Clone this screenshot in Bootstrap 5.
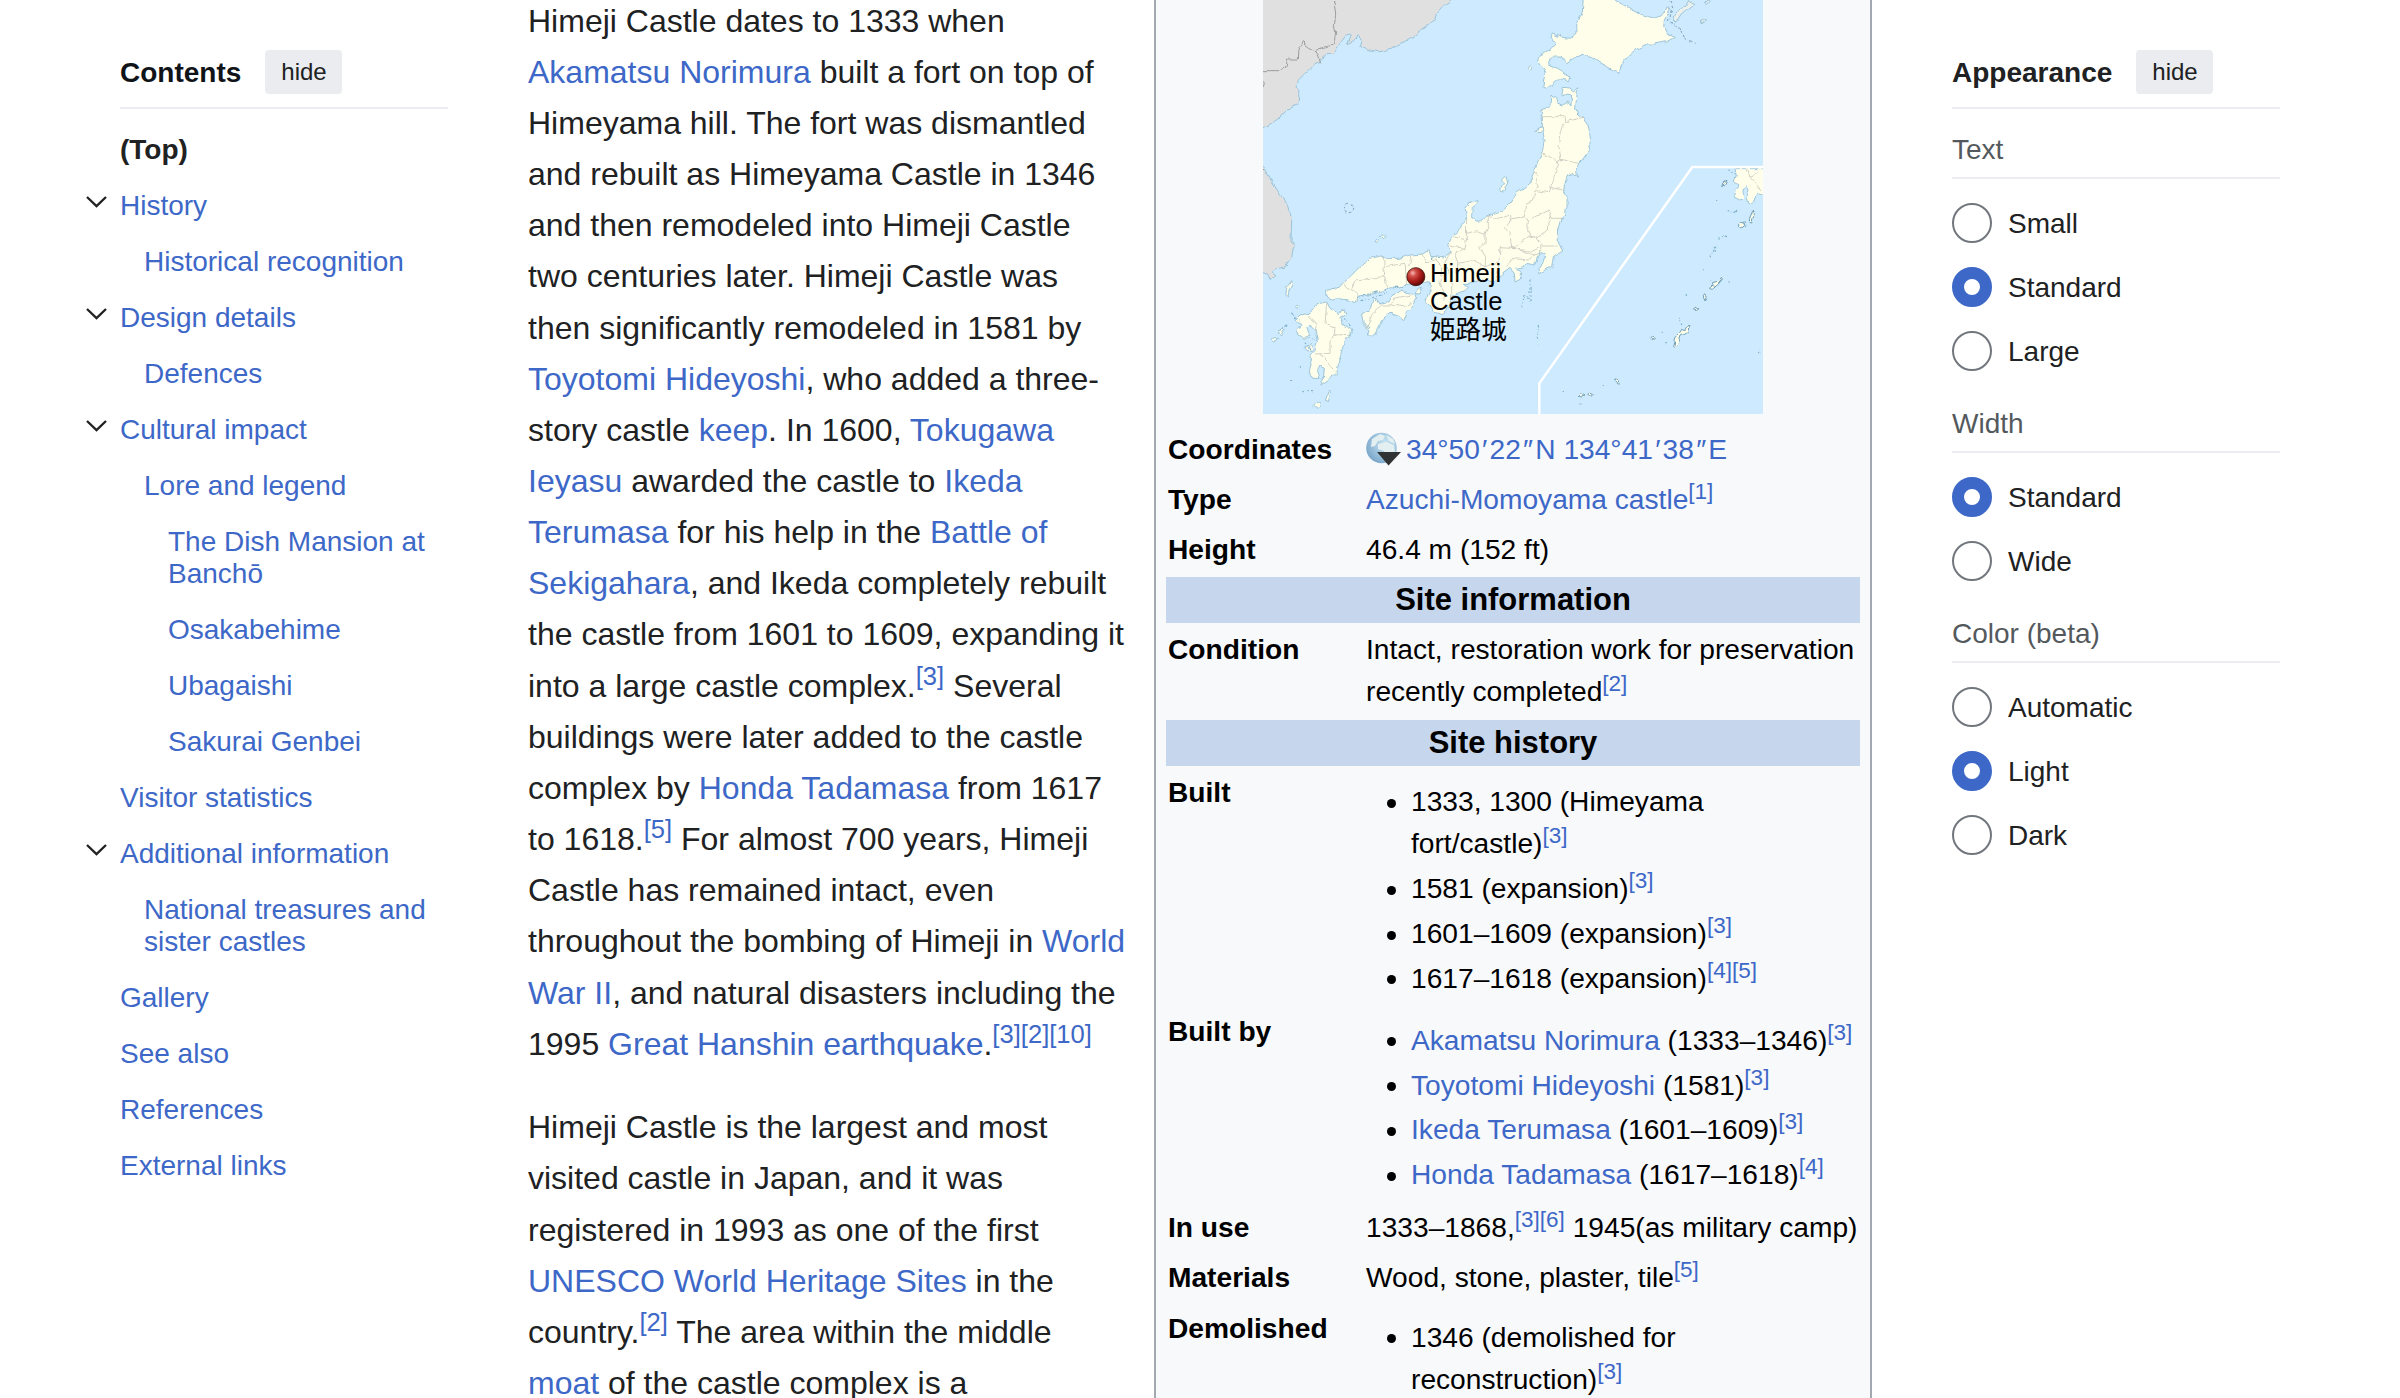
<!DOCTYPE html>
<html lang="en">
<head>
<meta charset="utf-8">
<title>Himeji Castle</title>
<meta name="viewport" content="width=device-width, initial-scale=1">
<link href="https://cdn.jsdelivr.net/npm/bootstrap@5.3.0/dist/css/bootstrap.min.css" rel="stylesheet">
<style>
  :root { --wiki-link: #3d68c8; --wiki-rule: #eaecf0; --wiki-ink: #202122; }
  body { font: 28px/32px "Liberation Sans", "Noto Sans CJK JP", sans-serif; color: var(--wiki-ink); background: #fff; height: 1398px; overflow: hidden; }
  a { color: var(--wiki-link); text-decoration: none; }
  a:hover { text-decoration: underline; }
  sup { position: static; top: auto; font-size: .8em; line-height: 1; vertical-align: super; white-space: nowrap; }

  .wiki-page { height: 1398px; }
  .wiki-toc { width: 328px; margin-left: 120px; }
  .wiki-article { width: 626px; margin-left: 80px; margin-top: -4.4px; font-size: 32px; line-height: 51.15px; white-space: nowrap; }
  .wiki-article p { margin: 0 0 32.4px; }
  .wiki-tools { width: 328px; margin-left: 80px; }

  .panel-head { height: 109px; padding: 50px 0 13px; gap: 24px; border-bottom: 2px solid var(--wiki-rule); }
  .panel-head strong { line-height: 44px; height: 44px; margin-top: 1px; }
  .btn-hide { --bs-btn-padding-x: 16px; --bs-btn-padding-y: 0; --bs-btn-font-size: 24px; --bs-btn-line-height: 42px; --bs-btn-border-width: 0; --bs-btn-border-radius: 4px; --bs-btn-bg: #eaecf0; --bs-btn-color: #202122; --bs-btn-hover-bg: #dadde3; width: 77px; height: 44px; }

  .toc-list { margin-top: 13px; }
  .toc-list li { padding: 12px 0; }
  .toc-list .lvl-2 { padding-left: 24px; }
  .toc-list .lvl-3 { padding-left: 48px; }
  .toc-toggle { width: 21px; height: 12px; margin: 6px 13px 0 -34px; flex: none; }

  .tool-title { color: #54595d; height: 70px; padding-top: 25px; border-bottom: 2px solid var(--wiki-rule); }
  .tool-title.later { height: 82px; padding-top: 37px; }
  .tool-options { padding-top: 24px; gap: 24px; }
  .tool-options .form-check { min-height: 40px; padding: 0; margin: 0; }
  .tool-options .form-check span { padding-top: 2px; }
  .tool-options .form-check-input { width: 40px; height: 40px; margin: 0 16px 0 0; float: none; border: 2px solid #72777d; flex: none; }
  .tool-options .form-check-input:checked { background: #fff; border: 12px solid var(--wiki-link); }

  .infobox { width: 718px; border: solid #a2a9b1; border-width: 0 2px; background: #f8f9fb; color: #000; font-size: 28.16px; line-height: 42.24px; padding: 0 10px; }
  .map-box { width: 500px; height: 414px; margin: 0 0 11px 97px; }
  .map-box svg { display: block; }
  .map-label { left: 167px; top: 259px; font-size: 25.6px; line-height: 28.4px; color: #000; }
  .fact { padding: 4px 0; }
  .fact dt { width: 200px; padding-left: 2px; flex: none; font-weight: 700; }
  .fact dd { margin: 0; white-space: nowrap; }
  .fact ul { list-style: none; margin: 9px 0 0; padding: 0 0 0 45px; }
  .fact li { margin-bottom: 2.6px; }
  .fact li::before { content: ""; display: inline-block; width: 9px; height: 9px; border-radius: 50%; background: #000; margin: 0 15.5px 0 -24.5px; vertical-align: 3.5px; }
  .fact-band { height: 46.5px; line-height: 46px; margin: 2px 0; background: #c6d6ed; font-size: 30.98px; font-weight: 700; text-align: center; }
  .fact-band.first { margin-top: 1px; }
  .prime { padding: 0 2.200px; }
  .globe { width: 36px; height: 36px; margin-right: 4px; vertical-align: -8px; }
</style>
</head>
<body>
<div class="wiki-page d-flex align-items-start">

  <nav class="wiki-toc flex-shrink-0">
    <div class="panel-head d-flex"><strong style="color:#101418">Contents</strong><button class="btn btn-hide">hide</button></div>
    <ul class="toc-list list-unstyled mb-0">
      <li><strong>(Top)</strong></li>
      <li class="d-flex"><svg class="toc-toggle" viewBox="0 0 21 12"><path d="M1 1l9.500 9.200L20 1" fill="none" stroke="#202122" stroke-width="2.300"/></svg><a href="#">History</a></li>
      <li class="lvl-2"><a href="#">Historical recognition</a></li>
      <li class="d-flex"><svg class="toc-toggle" viewBox="0 0 21 12"><path d="M1 1l9.500 9.200L20 1" fill="none" stroke="#202122" stroke-width="2.300"/></svg><a href="#">Design details</a></li>
      <li class="lvl-2"><a href="#">Defences</a></li>
      <li class="d-flex"><svg class="toc-toggle" viewBox="0 0 21 12"><path d="M1 1l9.500 9.200L20 1" fill="none" stroke="#202122" stroke-width="2.300"/></svg><a href="#">Cultural impact</a></li>
      <li class="lvl-2"><a href="#">Lore and legend</a></li>
      <li class="lvl-3"><a href="#">The Dish Mansion at<br>Banchō</a></li>
      <li class="lvl-3"><a href="#">Osakabehime</a></li>
      <li class="lvl-3"><a href="#">Ubagaishi</a></li>
      <li class="lvl-3"><a href="#">Sakurai Genbei</a></li>
      <li><a href="#">Visitor statistics</a></li>
      <li class="d-flex"><svg class="toc-toggle" viewBox="0 0 21 12"><path d="M1 1l9.500 9.200L20 1" fill="none" stroke="#202122" stroke-width="2.300"/></svg><a href="#">Additional information</a></li>
      <li class="lvl-2"><a href="#">National treasures and<br>sister castles</a></li>
      <li><a href="#">Gallery</a></li>
      <li><a href="#">See also</a></li>
      <li><a href="#">References</a></li>
      <li><a href="#">External links</a></li>
    </ul>
  </nav>

  <main class="wiki-article flex-shrink-0">
    <p>Himeji Castle dates to 1333 when<br>
    <a href="#">Akamatsu Norimura</a> built a fort on top of<br>
    Himeyama hill. The fort was dismantled<br>
    and rebuilt as Himeyama Castle in 1346<br>
    and then remodeled into Himeji Castle<br>
    two centuries later. Himeji Castle was<br>
    then significantly remodeled in 1581 by<br>
    <a href="#">Toyotomi Hideyoshi</a>, who added a three-<br>
    story castle <a href="#">keep</a>. In 1600, <a href="#">Tokugawa<br>
    Ieyasu</a> awarded the castle to <a href="#">Ikeda<br>
    Terumasa</a> for his help in the <a href="#">Battle of<br>
    Sekigahara</a>, and Ikeda completely rebuilt<br>
    the castle from 1601 to 1609, expanding it<br>
    into a large castle complex.<sup><a href="#">[3]</a></sup> Several<br>
    buildings were later added to the castle<br>
    complex by <a href="#">Honda Tadamasa</a> from 1617<br>
    to 1618.<sup><a href="#">[5]</a></sup> For almost 700 years, Himeji<br>
    Castle has remained intact, even<br>
    throughout the bombing of Himeji in <a href="#">World<br>
    War II</a>, and natural disasters including the<br>
    1995 <a href="#">Great Hanshin earthquake</a>.<sup><a href="#">[3]</a><a href="#">[2]</a><a href="#">[10]</a></sup></p>
    <p>Himeji Castle is the largest and most<br>
    visited castle in Japan, and it was<br>
    registered in 1993 as one of the first<br>
    <a href="#">UNESCO World Heritage Sites</a> in the<br>
    country.<sup><a href="#">[2]</a></sup> The area within the middle<br>
    <a href="#">moat</a> of the castle complex is a</p>
  </main>

  <aside class="infobox flex-shrink-0 align-self-stretch">
    <div class="map-box position-relative">
      <svg width="500" height="414" viewBox="24 0 1500 1242">
        <defs>
          <filter id="coast" x="0" y="0" width="100%" height="100%"><feTurbulence type="fractalNoise" baseFrequency=".045" numOctaves="2" seed="4"/><feDisplacementMap in="SourceGraphic" scale="14" xChannelSelector="R" yChannelSelector="G"/></filter>
          <radialGradient id="pin" cx=".33" cy=".3" r=".75"><stop offset="0" stop-color="#f6b9b5"/><stop offset=".25" stop-color="#d2504a"/><stop offset=".6" stop-color="#a81c18"/><stop offset="1" stop-color="#5c0805"/></radialGradient>
        </defs>
        <rect x="24" width="1500" height="1242" fill="#cdeafe"/>
        <g filter="url(#coast)">
          <rect x="-100" y="-100" width="1800" height="1500" fill="none"/>
          <g fill="#e0e0e0" stroke="#8fbcd2" stroke-width="2.500">
            <path d="M0-20H610L590 4 560 25 545 42 538 60 515 80 480 105 440 130 405 148 370 156 345 150 318 138 312 104 296 122 278 132 290 102 275 104 255 130 236 162 205 165 198 188 175 195 148 222 130 240 126 258 132 280 128 314 98 328 75 352 50 370 0 392Z"/>
            <path d="M10 480L28 500 50 545 80 590 100 612 110 660 108 725 118 735 108 775 92 800 60 808 50 812 60 830 45 838 38 822 10 815Z"/>
            <path d="M1255 62L1262 40 1290 18 1300 4 1320 14 1300 28 1280 40 1262 68ZM1335 65l12-8 8 3-10 8zM1352 8l10-12 4 4-8 10z" fill="#edf1ee"/>
          </g>
          <g fill="#fffeea" stroke="#8fbcd2" stroke-width="2.500" stroke-linejoin="round">
            <path d="M985-10L982 40 965 65 966 100 945 115 920 112 892 102 888 112 902 130 884 150 858 160 850 185 856 200 872 212 866 240 864 260 878 266 895 250 912 236 940 242 944 232 922 215 905 205 885 198 884 180 896 168 918 168 935 188 960 172 985 162 1010 170 1040 190 1092 220 1100 195 1112 175 1140 150 1175 132 1200 132 1235 125 1258 112 1238 104 1226 78 1228 60 1245 28 1240 20 1218 48 1195 54 1160 44 1130 28 1082 2 1075-10Z"/>
            <path d="M920 288L925 262 945 264 958 276 968 266 964 300 962 325 968 342 984 352 998 372 1004 400 1008 428 1000 455 985 475 970 492 965 515 970 532 958 520 936 530 928 555 926 575 936 590 936 620 930 645 918 655 908 690 906 720 923 753 895 770 890 800 872 808 855 822 852 805 864 785 872 765 858 758 846 775 838 795 815 790 805 800 785 805 800 818 795 838 780 846 778 820 765 805 745 820 735 830 715 845 680 840 660 845 640 850 625 850 640 862 630 872 605 880 590 890 582 920 560 944 535 935 520 912 512 905 520 880 530 860 520 845 500 850 480 858 455 853 430 862 405 860 385 875 340 885 310 888 300 908 280 900 250 896 225 902 215 885 215 870 240 868 265 850 290 825 320 795 345 775 380 768 395 775 430 775 465 765 500 762 522 752 528 770 550 768 575 765 588 755 578 735 590 710 620 680 635 655 630 620 645 606 672 602 668 612 652 622 650 650 660 664 680 662 700 648 740 632 765 610 785 580 820 555 835 520 850 485 862 455 868 420 862 380 862 350 858 332 885 318 888 285 895 292 905 290 908 310 925 315 940 305 948 315 950 285 935 282Z"/>
            <path d="M320 945L345 930 350 912 362 897 372 912 400 905 410 885 440 870 465 880 482 885 480 908 458 935 446 962 430 948 405 940 385 955 375 975 360 1005 340 1005 345 990 325 968Z"/>
            <path d="M135 945L165 938 185 912 215 906 225 925 250 940 268 930 272 945 255 955 265 975 290 990 285 1010 268 1025 258 1060 250 1090 245 1125 230 1125 222 1140 200 1156 195 1145 205 1130 208 1105 195 1098 188 1112 195 1135 170 1135 162 1120 168 1095 165 1065 180 1048 190 1020 185 998 170 985 165 975 155 985 165 1005 150 1018 132 1005 122 990 130 982 145 975 130 968 120 960Z"/>
            <path d="M150 1042l18-8 6 14-16 8zM50 1015l10-6 8 6-10 8zM70 1000l14-16 4 4-10 16zM92 885l4-25 14-18 2 10-10 18-4 20zM738 562l8-12-6-5 14-14 4 18-12 24-8-2zM480 880l10-15 12-3-10 20zM842 392l10-6 12-6 2 12-14 6zM820 205l6-8 6 4-6 10zM376 710l8-6 6 6-6 6zM360 724l6-6 5 4-6 5zM124 920l5-5 4 5-4 5zM212 1205l4-20 8-12 2 6-6 26zM176 1216l8-9 10 3 2 9-9 6z"/>
            <path stroke="#6f9db5" stroke-width="3" d="M1450 672l6-8 10 2 4 10-10 8zM1482 668l4-20 10-15 2 8-8 28zM1400 560l4-12 12-8-6 14zM1345 890l4-6 5 8-5 10zM1318 930l8-6 6 2-8 6zM1256 1038l6-24 12-16 6-10 8 4 10-16 6 2-10 22-16 8-8 22-12 12zM1364 866l8-18 16-4 12-12 2 6-14 16-16 14zM970 1190l10-8 10 6-12 6zM998 1186l8-10 8 4-8 8zM1078 1142l8-5 10 16-8-2zM1188 1015l6-3 4 4-6 3z"/>
            <path d="M1440 506L1444 525 1438 545 1452 555 1440 570 1436 590 1454 600 1466 595 1464 570 1476 556 1482 570 1476 590 1482 612 1496 600 1508 582 1520 584 1540 560 1540 506Z"/>
          </g>
          <g fill="none" stroke="#c4c6bc" stroke-width="2.400">
            <path d="M864 350L930 350 932 365 984 352M928 368L918 400 912 440 918 480M862 462L880 468 908 485 920 478 970 490M908 485L905 520 890 550 882 578 845 572M835 515L850 525 842 545 850 560 838 578 836 600 812 610 808 650M890 562L928 572M700 650L730 658 765 645 770 660 808 650 820 660 880 630 888 655 918 655M770 660L750 685 765 700 768 730 775 745 820 710 845 715M820 660L818 690 825 708 842 712 880 690 884 650M842 712L860 738 908 738M775 745L830 755 858 740M858 740L856 760 838 765 770 742 735 740 732 785M838 765L820 780 770 775 755 800M700 650L700 680 690 700 690 730 675 745 692 770 690 800 732 785 728 830M635 700L665 692 694 700M635 655L634 720 595 710M634 720L630 745 585 738M630 745L600 760 608 790 605 830M608 790L650 782 690 800M590 755L570 785 580 820M500 762L515 785 540 780 560 800 555 850M465 765L470 790 458 800M385 770L388 800 450 790 455 850M388 800L385 830 300 840 290 870M385 830L395 860M270 850L285 870 305 880 308 905M555 850L570 880 565 910M590 850L590 890M350 945L380 915 410 915 446 920 470 910M410 915L415 895 470 885M350 945L335 985M160 945L185 970 180 1000M215 910L210 970 240 980 238 1005 285 1003M238 1005L225 1025 225 1060 180 1062M195 1062L245 1120M1474 510L1484 530 1506 515M1484 530L1518 570"/>
          </g>
          <g fill="none" stroke="#9a9c9e" stroke-width="3"><path d="M234-10L242 40 238 80 242 100 235 135 205 142 180 152 190 165 200 190M180 152L160 142 142 128 132 145 130 180 98 180 92 200 75 212 0 212M20 240l8 8-5 14M0 520l30-12"/></g>
          <g fill="none" stroke="#82b2cb" stroke-width="3.500" stroke-dasharray="5 7 2 6 9 5"><path d="M305 895L340 882 380 872 410 864 450 860M320 905L360 890 400 880M118 955L108 940 135 965M75 995L98 970M150 1025L165 1050M150 1010l35 8M135 1100l10-15M528 775l50-6M825 840v60l-15-20-10 40M850 975v60M1420 510l22 8M1228 1028h6M1222 996v3M1280 975l-6-25M1375 860l-8-20M1385 600v3M1415 632l30 3M1390 715l14-6 12 4M1365 775l24-46M1420 846h5M1294 885v3M1348 805v3M1045 1155v3M920 1175h6M976 1212h4M1510 1062l4-12M145 1175h30M110 1140v3M268 955l20 25"/></g>
          <g fill="none" stroke="#789eb5" stroke-width="3" stroke-dasharray="8 6"><path d="M1238-8L1254 25 1240 62 1272 82 1290 115 1322 130"/><circle cx="282" cy="624" r="14"/></g>
        </g>
        <path d="M853 1245V1150L1312 501H1530" fill="none" stroke="#fff" stroke-width="7.500"/>
        <circle cx="482.500" cy="830" r="27" fill="url(#pin)" stroke="#3b0c0a" stroke-width="2.500"/>
      </svg>
      <div class="map-label position-absolute">Himeji<br>Castle<br>姫路城</div>
    </div>

    <dl class="mb-0">
      <div class="fact d-flex"><dt>Coordinates</dt><dd><svg class="globe" viewBox="0 0 36 36"><defs><radialGradient id="orb" cx=".65" cy=".35" r=".7"><stop offset="0" stop-color="#c9e6f2"/><stop offset=".6" stop-color="#9dc3de"/><stop offset="1" stop-color="#7ba7ca"/></radialGradient></defs><circle cx="15.500" cy="17" r="15.300" fill="url(#orb)"/><path d="M6 8l8-5 5 2-2 4-5 1-3 5-4 1zM12 13l8-2 8 3 1 8-4 4-4-1-3-5-6-2zM20 4l7 4 2 5-6-3z" fill="#e3eff0"/><path d="M11 21H35L22.500 34.500Z" fill="#303234"/></svg><a href="#">34°50<span class="prime">′</span>22<span class="prime">″</span>N 134°41<span class="prime">′</span>38<span class="prime">″</span>E</a></dd></div>
      <div class="fact d-flex"><dt>Type</dt><dd><a href="#">Azuchi-Momoyama castle</a><sup><a href="#">[1]</a></sup></dd></div>
      <div class="fact d-flex"><dt>Height</dt><dd>46.4 m (152 ft)</dd></div>
      <div class="fact-band first">Site information</div>
      <div class="fact d-flex"><dt>Condition</dt><dd>Intact, restoration work for preservation<br>recently completed<sup><a href="#">[2]</a></sup></dd></div>
      <div class="fact-band">Site history</div>
      <div class="fact d-flex"><dt>Built</dt><dd><ul>
        <li>1333, 1300 (Himeyama<br>fort/castle)<sup><a href="#">[3]</a></sup></li>
        <li>1581 (expansion)<sup><a href="#">[3]</a></sup></li>
        <li>1601–1609 (expansion)<sup><a href="#">[3]</a></sup></li>
        <li>1617–1618 (expansion)<sup><a href="#">[4]</a><a href="#">[5]</a></sup></li>
      </ul></dd></div>
      <div class="fact d-flex"><dt>Built by</dt><dd><ul>
        <li><a href="#">Akamatsu Norimura</a> (1333–1346)<sup><a href="#">[3]</a></sup></li>
        <li><a href="#">Toyotomi Hideyoshi</a> (1581)<sup><a href="#">[3]</a></sup></li>
        <li><a href="#">Ikeda Terumasa</a> (1601–1609)<sup><a href="#">[3]</a></sup></li>
        <li><a href="#">Honda Tadamasa</a> (1617–1618)<sup><a href="#">[4]</a></sup></li>
      </ul></dd></div>
      <div class="fact d-flex"><dt>In use</dt><dd>1333–1868,<sup><a href="#">[3]</a><a href="#">[6]</a></sup> 1945(as military camp)</dd></div>
      <div class="fact d-flex"><dt>Materials</dt><dd>Wood, stone, plaster, tile<sup><a href="#">[5]</a></sup></dd></div>
      <div class="fact d-flex"><dt>Demolished</dt><dd><ul>
        <li>1346 (demolished for<br>reconstruction)<sup><a href="#">[3]</a></sup></li>
      </ul></dd></div>
    </dl>
  </aside>

  <aside class="wiki-tools flex-shrink-0">
    <div class="panel-head d-flex"><strong>Appearance</strong><button class="btn btn-hide">hide</button></div>
    <div class="tool-title">Text</div>
    <div class="tool-options d-flex flex-column">
      <label class="form-check d-flex align-items-center"><input class="form-check-input" type="radio" name="text"><span>Small</span></label>
      <label class="form-check d-flex align-items-center"><input class="form-check-input" type="radio" name="text" checked><span>Standard</span></label>
      <label class="form-check d-flex align-items-center"><input class="form-check-input" type="radio" name="text"><span>Large</span></label>
    </div>
    <div class="tool-title later">Width</div>
    <div class="tool-options d-flex flex-column">
      <label class="form-check d-flex align-items-center"><input class="form-check-input" type="radio" name="width" checked><span>Standard</span></label>
      <label class="form-check d-flex align-items-center"><input class="form-check-input" type="radio" name="width"><span>Wide</span></label>
    </div>
    <div class="tool-title later">Color (beta)</div>
    <div class="tool-options d-flex flex-column">
      <label class="form-check d-flex align-items-center"><input class="form-check-input" type="radio" name="color"><span>Automatic</span></label>
      <label class="form-check d-flex align-items-center"><input class="form-check-input" type="radio" name="color" checked><span>Light</span></label>
      <label class="form-check d-flex align-items-center"><input class="form-check-input" type="radio" name="color"><span>Dark</span></label>
    </div>
  </aside>
</div>
<script src="https://cdn.jsdelivr.net/npm/bootstrap@5.3.0/dist/js/bootstrap.bundle.min.js"></script>
</body>
</html>
